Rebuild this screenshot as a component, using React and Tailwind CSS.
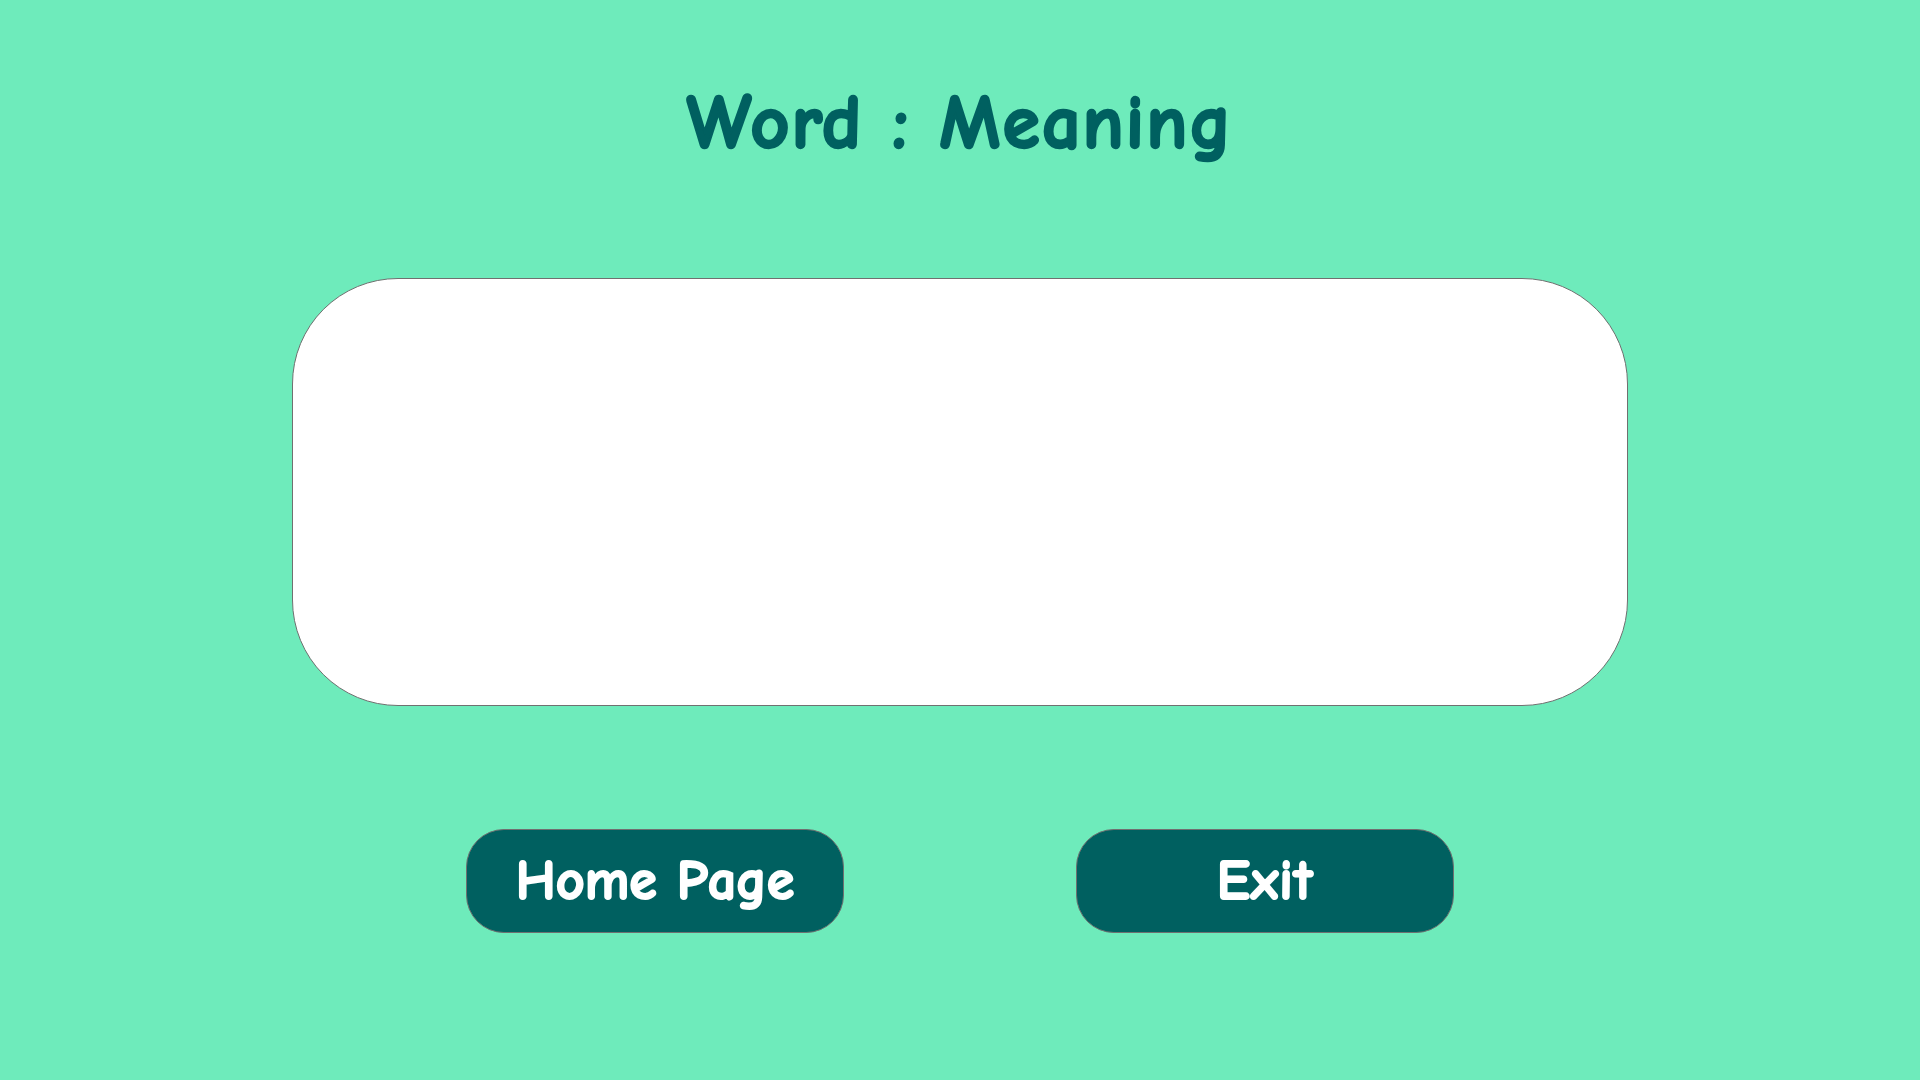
export default function App() {
  const font = { fontFamily: '"Comic Sans MS", "Comic Neue", cursive' };
  return (
    <div className="w-[1920px] h-[1080px] bg-[#6eebbb] flex flex-col items-center" style={font}>
      <h1 className="mt-[86px] text-[76px] leading-none font-bold tracking-[2px] text-[#006060] [-webkit-text-stroke:2.5px_#006060]">
        Word : Meaning
      </h1>

      <div className="mt-[116px] w-[1336px] h-[428px] bg-white rounded-[106px] border border-[#707070]"></div>

      <div className="mt-[123px] flex gap-[232px]">
        <button className="w-[378px] h-[104px] rounded-[38px] bg-[#006060] border border-[#707070] text-white text-[56px] font-bold [-webkit-text-stroke:2px_white]">
          Home Page
        </button>
        <button className="w-[378px] h-[104px] rounded-[38px] bg-[#006060] border border-[#707070] text-white text-[56px] font-bold tracking-[1px] [-webkit-text-stroke:2px_white]">
          Exit
        </button>
      </div>
    </div>
  );
}
